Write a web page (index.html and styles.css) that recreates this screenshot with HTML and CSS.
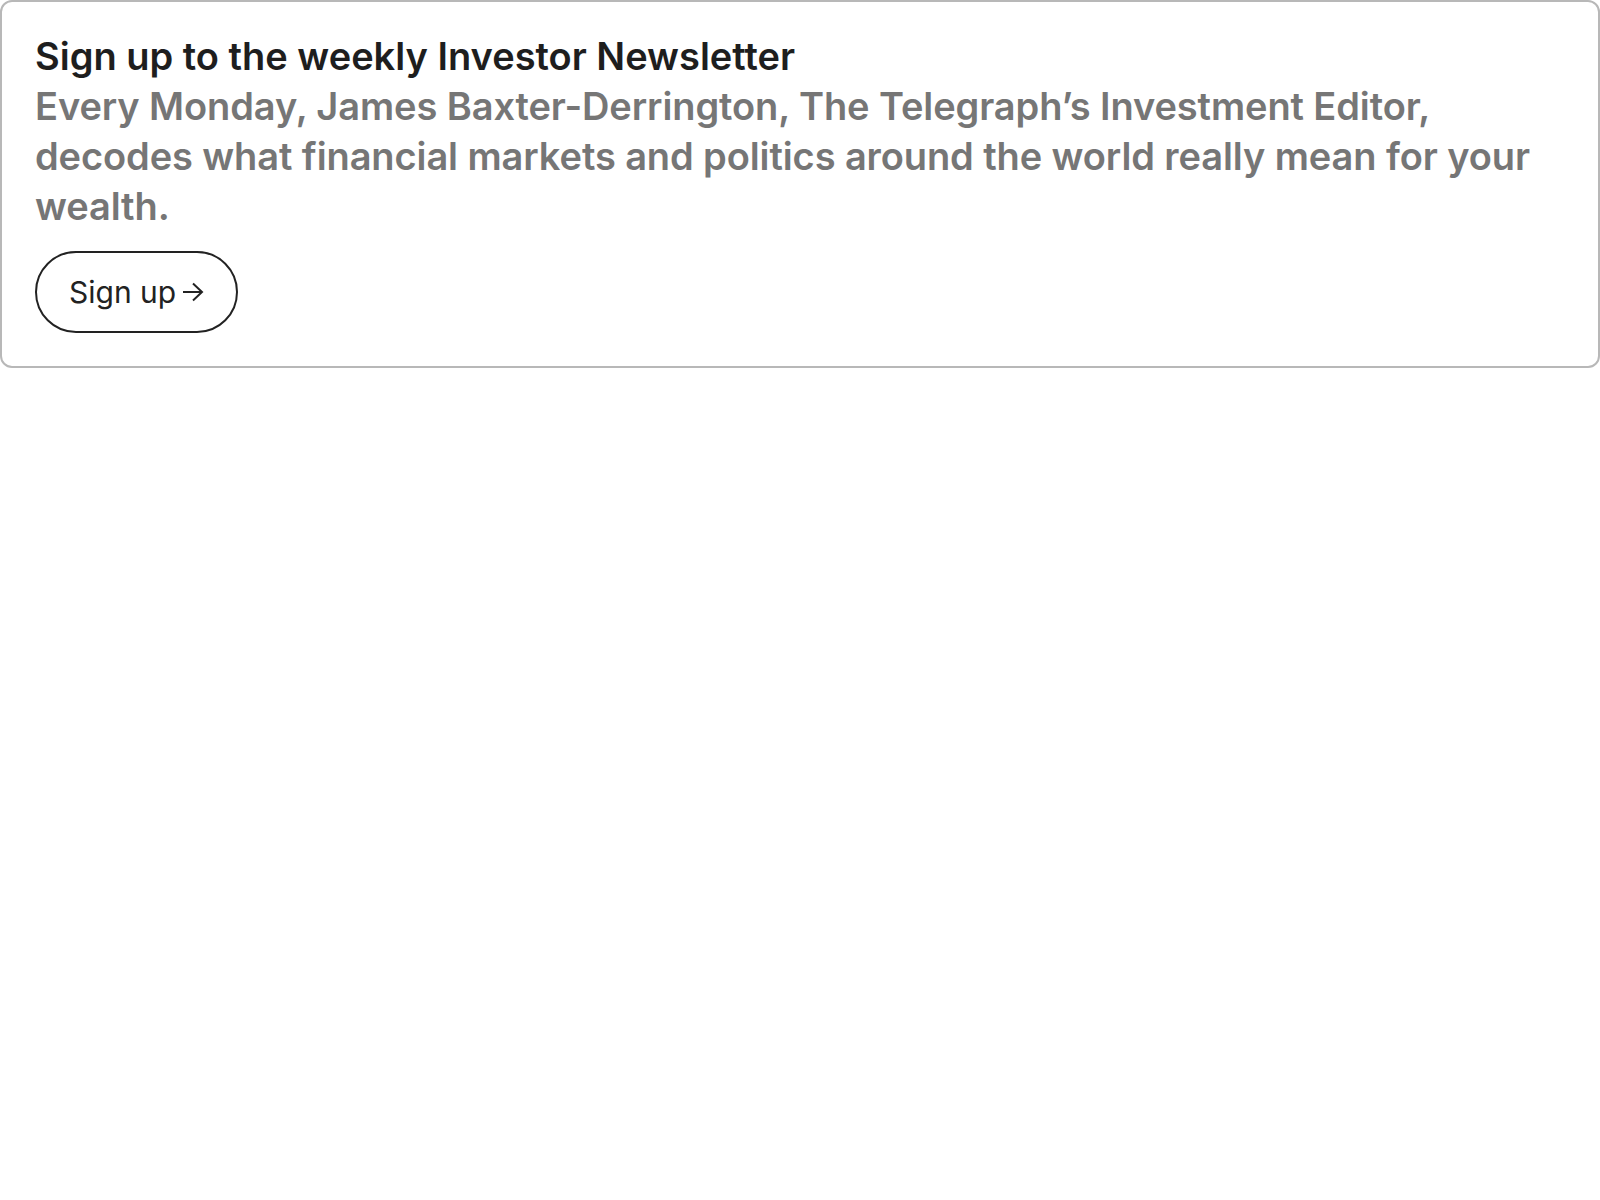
FILE: index.html
```html
<!DOCTYPE html>
<html>
<head>
    <title>Investor Newsletter</title>
    <link rel="stylesheet" href="styles.css">
</head>
<body>
    <div class="signup-card">
        <h2 class="signup-title">Sign up to the weekly Investor Newsletter</h2>
        <p class="signup-text">Every Monday, James Baxter-Derrington, The Telegraph’s Investment Editor, decodes what financial markets and politics around the world really mean for your wealth.</p>
        <a class="signup-button" href="#">Sign up
            <svg class="arrow" viewBox="0 0 22 20" width="22" height="20">
                <path d="M1 10H20M11 1.5L20 10L11 18.5" fill="none" stroke="#222" stroke-width="2"/>
            </svg>
        </a>
    </div>
</body>
</html>
```

FILE: styles.css
```css
body {
    margin: 0;
    background: #fff;
    font-family: Inter, "Liberation Sans", Arial, sans-serif;
}
.signup-card {
    border: 2px solid #b8b8b8;
    border-radius: 12px;
    padding: 29px 32px 33px 33px;
}
.signup-title {
    margin: 0;
    font-size: 38px;
    line-height: 50px;
    font-weight: 600;
    letter-spacing: 0;
    color: #1e1e1e;
}
.signup-text {
    margin: 0 0 20px;
    font-size: 38px;
    line-height: 50px;
    font-weight: 600;
    letter-spacing: -0.1px;
    color: #767676;
}
.signup-button {
    display: inline-flex;
    align-items: center;
    height: 78px;
    padding: 0 32px;
    border: 2px solid #222;
    border-radius: 41px;
    font-size: 30px;
    color: #222;
    text-decoration: none;
}
.arrow {
    margin-left: 6px;
}
```
